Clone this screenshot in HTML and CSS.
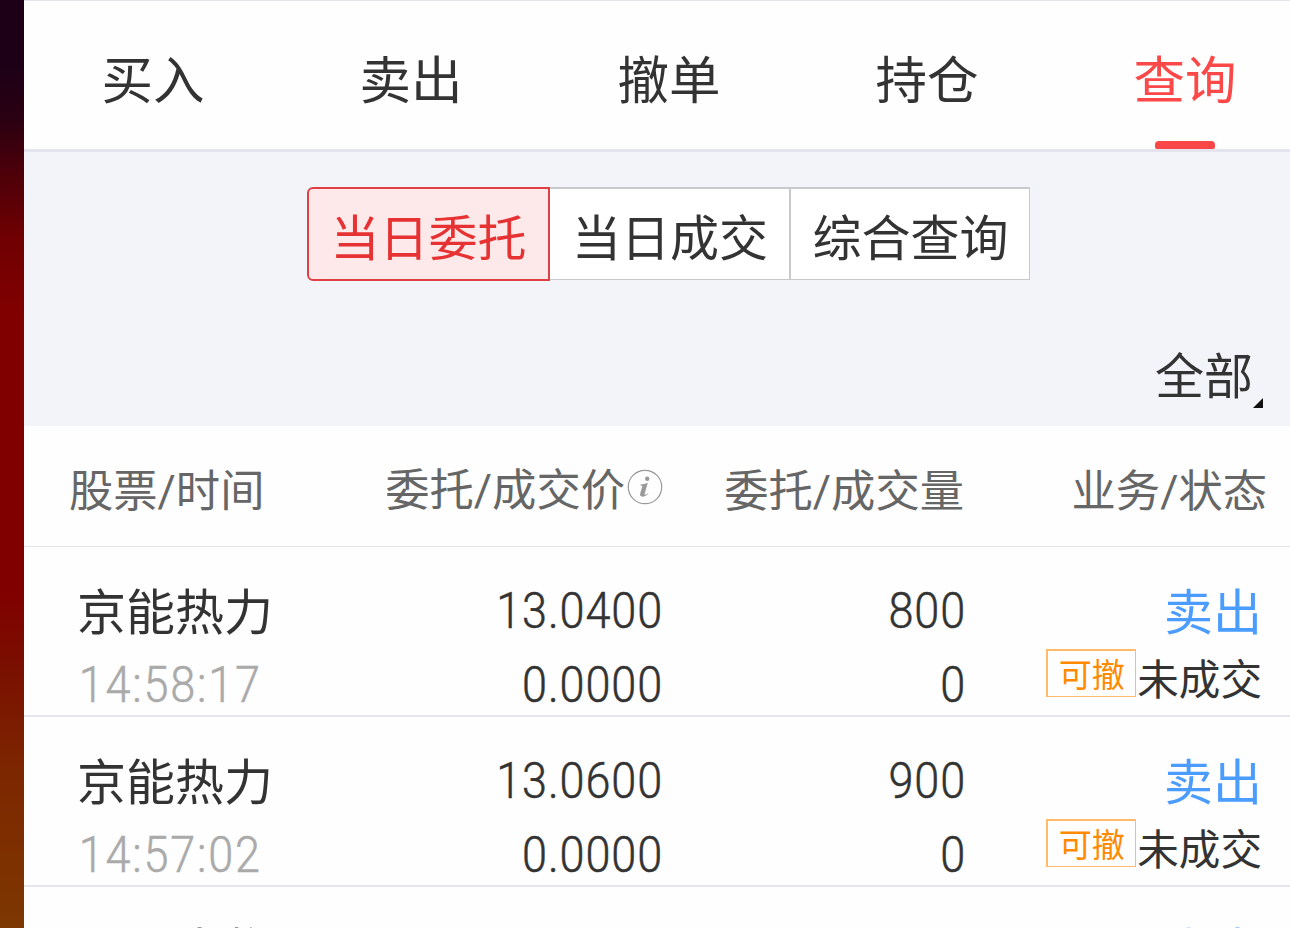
FILE: index.html
```
<!DOCTYPE html>
<html lang="zh-CN">
<head>
<meta charset="utf-8">
<title>当日委托</title>
<link rel="stylesheet" href="styles.css">
</head>
<body>
<div class="screen">
  <aside class="backdrop"></aside>
  <main class="panel">
    <nav class="tabs">
      <a class="tab">买入</a><a class="tab">卖出</a><a class="tab">撤单</a><a class="tab">持仓</a><a class="tab tab-active">查询</a>
    </nav>
    <section class="filters">
      <div class="segments">
        <span class="segment segment-active">当日委托</span><span class="segment">当日成交</span><span class="segment">综合查询</span>
      </div>
      <div class="scope"><span>全部</span><svg class="corner" viewBox="0 0 10 10"><path d="M10 0V10H0Z" fill="#111"/></svg></div>
    </section>
    <header class="columns">
      <span class="c-name">股票/时间</span>
      <span class="c-price">委托/成交价<svg class="info" viewBox="0 0 36 36"><circle cx="18" cy="18" r="16.7" fill="none" stroke="#999" stroke-width="1.2"/><circle cx="20.2" cy="9.8" r="2.2" fill="#999"/><path d="M13.5 15.5Q17.5 15.3 20.8 13.8L17.5 25.3Q17.5 26.5 21 24.2L21.4 24.8Q17 28.7 14 27.3Q12.6 26.6 13.2 24.5L15.3 17.4Q15.5 16.4 13.5 16.5Z" fill="#999"/></svg></span>
      <span class="c-qty">委托/成交量</span>
      <span class="c-state">业务/状态</span>
    </header>
    <section class="orders">
      <article class="order">
        <div class="c-name"><div class="stock">京能热力</div><div class="num time">14:58:17</div></div>
        <div class="c-price"><div class="num">13.0400</div><div class="num">0.0000</div></div>
        <div class="c-qty"><div class="num">800</div><div class="num">0</div></div>
        <div class="c-state"><div class="side">卖出</div><div class="status"><span class="badge">可撤</span><span>未成交</span></div></div>
      </article>
      <article class="order">
        <div class="c-name"><div class="stock">京能热力</div><div class="num time">14:57:02</div></div>
        <div class="c-price"><div class="num">13.0600</div><div class="num">0.0000</div></div>
        <div class="c-qty"><div class="num">900</div><div class="num">0</div></div>
        <div class="c-state"><div class="side">卖出</div><div class="status"><span class="badge">可撤</span><span>未成交</span></div></div>
      </article>
      <article class="order order-next">
        <div class="c-name"><div class="stock">四环生物</div></div>
        <div class="c-price"></div>
        <div class="c-qty"></div>
        <div class="c-state"><div class="side">卖出</div></div>
      </article>
    </section>
  </main>
</div>
</body>
</html>
```
FILE: styles.css
```
* { box-sizing: border-box; }
body { margin: 0; overflow: hidden; color: #333; font-family: "Noto Sans CJK SC", sans-serif; }
.screen { display: flex; width: 1290px; height: 928px; overflow: hidden; }
.backdrop { flex: 0 0 24px; background: linear-gradient(#1d0018 0, #1d0018 65px, #2b0011 120px, #4e0009 175px, #700002 240px, #800000 310px, #800000 590px, #7a1000 670px, #7d2800 780px, #7d3700 928px); }
.panel { flex: 1; min-width: 0; background: #fefefe; }
.tabs { display: flex; height: 152px; padding: 0; border-top: 1px solid #e4e4ee; border-bottom: 3px solid #e4e4ee; }
.tab { position: relative; flex: 0 0 258px; height: 148px; font-size: 51.5px; line-height: 152px; text-align: center; }
.tab-active { color: #fb4848; }
.tab-active::after { content: ""; position: absolute; left: 99px; bottom: 0; width: 60px; height: 8px; border-radius: 4px 4px 2px 2px; background: #f94747; }
.filters { height: 274px; padding: 35px 27px 0 0; background: #f3f4f9; }
.segments { display: flex; width: 724px; height: 95px; margin-left: 282px; }
.segment { height: 93px; flex: 0 0 240px; background: #fff; border: 1px solid #c9c9cd; border-top-width: 2px; border-left: 0; font-size: 49px; line-height: 92px; text-align: center; }
.segment + .segment { padding-left: 1px; }
.segment + .segment + .segment { border-left: 1px solid #c9c9cd; }
.segment-active { height: 94px; flex-basis: 243px; margin-left: 1px; background: #fde9e9; color: #e63232; border: 2px solid #e04044; border-radius: 6px 0 0 6px; }
.scope { display: flex; justify-content: flex-end; align-items: flex-end; height: 126px; font-size: 49px; line-height: 64px; }
.scope span { padding-bottom: 3px; }
.corner { width: 10px; height: 10px; }
.columns { display: grid; grid-template-columns: 300px 338px 303px 1fr; height: 121px; border-bottom: 1px solid #e4e4ee; color: #666; font-family: Roboto, "Noto Sans CJK SC", sans-serif; font-size: 44.3px; line-height: 133px; white-space: nowrap; }
.columns .c-name { padding-left: 45px; }
.columns .c-price { display: flex; justify-content: flex-end; line-height: 130px; }
.info { width: 36px; height: 36px; margin: 43px -1px 0 2px; }
.columns .c-qty { padding-right: 1px; text-align: right; }
.columns .c-state { text-align: right; padding-right: 23px; }
.order { display: grid; grid-template-columns: 300px 338px 303px 1fr; height: 170px; border-bottom: 2px solid #e6e6ec; }
.order > div { padding-top: 28px; }
.order .c-name { padding-left: 53px; }
.stock, .side { height: 74px; font-size: 49px; line-height: 67px; white-space: nowrap; }
.order-next .stock, .order-next .side { line-height: 66px; }
.num { height: 74px; margin-right: -1px; font: 300 50px/73px Roboto, sans-serif; letter-spacing: 1px; text-align: right; transform: scaleX(.9); transform-origin: right center; white-space: nowrap; -webkit-text-stroke: .5px currentColor; }
.time { padding-left: 2px; color: #aaa; letter-spacing: 2px; text-align: left; transform-origin: left center; }
.order .c-state { padding-right: 28px; }
.side { color: #4a9cff; text-align: right; }
.status { display: flex; justify-content: flex-end; font-size: 41.6px; line-height: 56px; white-space: nowrap; }
.badge { width: 90px; height: 48px; margin-right: 1px; border: 2px solid #ffba6a; border-right-width: 1px; border-bottom-width: 1px; color: #ff8a00; font-size: 33px; line-height: 44px; text-align: center; }
```
